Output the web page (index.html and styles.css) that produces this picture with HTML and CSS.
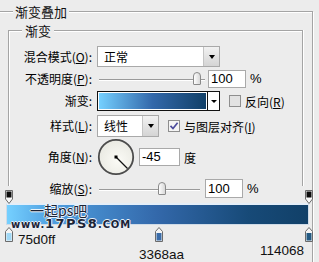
FILE: index.html
```html
<!DOCTYPE html>
<html lang="zh">
<head>
<meta charset="utf-8">
<link rel="stylesheet" href="styles.css">
</head>
<body>
<fieldset class="outer">
  <legend class="outer-title">渐变叠加</legend>
  <fieldset class="inner">
    <legend class="inner-title">渐变</legend>

    <div class="row r1">
      <span class="lbl">混合模式(<u>O</u>):</span>
      <div class="select sel-mode"><span class="sel-text">正常</span><span class="sel-btn"><i class="tri"></i></span></div>
    </div>

    <div class="row r2">
      <span class="lbl">不透明度(<u>P</u>):</span>
      <div class="slider s-opacity"><span class="thumb"></span></div>
      <span class="num n-opacity">100</span>
      <span class="unit">%</span>
    </div>

    <div class="row r3">
      <span class="lbl">渐变:</span>
      <div class="grad-field"><span class="grad-swatch"></span><span class="grad-btn"><i class="tri"></i></span></div>
      <span class="check"></span>
      <span class="check-lbl">反向(<u>R</u>)</span>
    </div>

    <div class="row r4">
      <span class="lbl">样式(<u>L</u>):</span>
      <div class="select sel-style"><span class="sel-text">线性</span><span class="sel-btn"><i class="tri"></i></span></div>
      <span class="check checked"><svg width="10" height="10" viewBox="0 0 10 10"><path d="M1.5 4.8 L4 7.5 L8.6 1.8" fill="none" stroke="#4b4b9c" stroke-width="1.7"/></svg></span>
      <span class="check-lbl">与图层对齐(<u>I</u>)</span>
    </div>

    <div class="row r5">
      <span class="lbl">角度(<u>N</u>):</span>
      <svg class="dial" width="38" height="38" viewBox="0 0 38 38">
        <defs>
          <radialGradient id="dg" cx="0.55" cy="0.6" r="0.6">
            <stop offset="0" stop-color="#fbfbf6"/>
            <stop offset="1" stop-color="#e9e9e2"/>
          </radialGradient>
        </defs>
        <circle cx="19" cy="19" r="17.2" fill="url(#dg)" stroke="#4c4c4c" stroke-width="1.8"/>
        <line x1="19" y1="19" x2="30.5" y2="30.5" stroke="#111" stroke-width="1.2"/>
        <rect x="17.5" y="17.5" width="3" height="3" fill="#000"/>
      </svg>
      <span class="num n-angle">-45</span>
      <span class="unit deg">度</span>
    </div>

    <div class="row r6">
      <span class="lbl">缩放(<u>S</u>):</span>
      <div class="slider s-scale"><span class="thumb"></span></div>
      <span class="num n-scale">100</span>
      <span class="unit">%</span>
    </div>
  </fieldset>

  <div class="editor">
    <svg class="stop top s-left" width="8" height="14" viewBox="0 0 8 14"><path d="M0.5 0.5 H7.5 V9 L4 13.5 L0.5 9 Z" fill="#fafafa" stroke="#6b6b6b"/><rect x="1.5" y="1.5" width="5" height="6" fill="#0d0d0d"/></svg>
    <svg class="stop top s-right" width="8" height="14" viewBox="0 0 8 14"><path d="M0.5 0.5 H7.5 V9 L4 13.5 L0.5 9 Z" fill="#fafafa" stroke="#6b6b6b"/><rect x="1.5" y="1.5" width="5" height="6" fill="#0d0d0d"/></svg>

    <div class="strip"></div>

    <svg class="stop bottom b-left" width="8" height="15" viewBox="0 0 8 15"><path d="M4 0.5 L7.5 4.5 V14.5 H0.5 V4.5 Z" fill="#f4f4f4" stroke="#6b6b6b"/><rect x="1.5" y="6" width="5" height="7.5" fill="#9fd8f6"/></svg>
    <svg class="stop bottom b-mid" width="8" height="15" viewBox="0 0 8 15"><path d="M4 0.5 L7.5 4.5 V14.5 H0.5 V4.5 Z" fill="#f4f4f4" stroke="#6b6b6b"/><rect x="1.5" y="6" width="5" height="7.5" fill="#3a6ca8"/></svg>
    <svg class="stop bottom b-right" width="8" height="15" viewBox="0 0 8 15"><path d="M4 0.5 L7.5 4.5 V14.5 H0.5 V4.5 Z" fill="#f4f4f4" stroke="#6b6b6b"/><rect x="1.5" y="6" width="5" height="7.5" fill="#235a82"/></svg>

    <span class="code c-left">75d0ff</span>
    <span class="code c-mid">3368aa</span>
    <span class="code c-right">114068</span>

    <span class="wm wm-cn">一起ps吧</span>
    <span class="wm wm-url">www.<b>17PS8</b>.COM</span>
  </div>
</fieldset>
</body>
</html>
```

FILE: styles.css
```css
html, body {
  height: 100%;
  overflow: hidden;
}

body {
  margin: 0;
  background: #ececec;
  color: #000;
  font-family: "Noto Sans CJK SC", "Liberation Sans", sans-serif;
  font-size: 12px;
}

u {
  text-decoration: underline;
  text-underline-offset: 1px;
}

.outer {
  box-sizing: border-box;
  margin: 3px 0 0 -3px;
  width: 316px;
  min-width: 0;
  border: 1px solid #a4a4a4;
  box-shadow: inset 1px 1px 0 #fff, 1px 1px 0 #fff;
  padding: 2px 9px 0 10px;
}

.outer-title,
.inner-title {
  font-size: 13px;
  line-height: 17px;
  background: #ececec;
  color: #111;
}

.outer-title {
  margin-left: 5px;
  padding: 0 2px;
}

.inner {
  box-sizing: border-box;
  height: 164px;
  margin: 0;
  min-width: 0;
  border: 1px solid #a4a4a4;
  border-bottom: none;
  box-shadow: inset 1px 1px 0 #fff, 1px 0 0 #fff;
  padding: 7px 4px 0 11px;
}

.inner-title {
  margin-left: 2px;
  padding: 0 3px;
}

.row {
  display: flex;
  align-items: center;
  box-sizing: border-box;
}

.r1 { height: 21px; }
.r2 { height: 21px; margin-top: 1px; }
.r3 { height: 22px; padding-top: 2px; }
.r4 { height: 26px; padding-top: 4px; }
.r5 { height: 40px; }
.r6 { height: 23px; }

.lbl {
  flex: none;
  width: 72px;
  margin-right: 5px;
  text-align: right;
  line-height: 14px;
  white-space: nowrap;
}

/* select boxes */
.select {
  box-sizing: border-box;
  display: flex;
  height: 21px;
  border: 1px solid #a9a9a9;
  background: #fff;
}

.sel-mode { width: 123px; }
.sel-style { width: 62px; height: 22px; }

.sel-text {
  flex: 1;
  padding-left: 6px;
  line-height: 19px;
}

.sel-btn {
  width: 15px;
  display: flex;
  align-items: center;
  justify-content: center;
  background: linear-gradient(#f2f2f2, #d4d4d4);
  border-left: 1px solid #c4c4c4;
}

.tri {
  width: 0;
  height: 0;
  border-left: 3.5px solid transparent;
  border-right: 3.5px solid transparent;
  border-top: 4px solid #000;
}

/* slider */
.slider {
  position: relative;
  height: 14px;
  flex: none;
}

.slider::before {
  content: "";
  position: absolute;
  left: 2px;
  right: 0;
  top: 7px;
  height: 1px;
  background: #9a9a9a;
  box-shadow: 0 1px 0 #fff;
}

.s-opacity { width: 108px; }
.s-scale { width: 103px; margin-right: 5px; }

.thumb {
  position: absolute;
  top: 0;
  width: 8px;
  height: 13px;
  box-sizing: border-box;
  border: 1px solid #8a8a8a;
  border-radius: 4px 4px 1px 1px;
  background: linear-gradient(90deg, #fdfdfd, #d8d8d8);
}

.s-opacity .thumb { left: 96px; }
.s-scale .thumb { left: 61px; }

/* numeric fields */
.num {
  box-sizing: border-box;
  height: 18px;
  border: 1px solid #a9a9a9;
  background: #fff;
  font-family: "Liberation Sans", Arial, sans-serif;
  font-size: 13px;
  line-height: 16px;
  padding-left: 2px;
}

.n-opacity { width: 38px; margin-left: 3px; }
.n-scale { width: 38px; height: 19px; line-height: 17px; }
.n-angle { width: 41px; margin-left: 4px; }

.unit {
  margin-left: 4px;
  font-family: "Liberation Sans", Arial, sans-serif;
  font-size: 13px;
}

.unit.deg {
  font-family: "Noto Sans CJK SC", sans-serif;
  font-size: 12px;
}

/* gradient field */
.grad-field {
  box-sizing: border-box;
  display: flex;
  width: 123px;
  height: 20px;
  border: 1px solid #111;
  background: #fff;
}

.grad-swatch {
  flex: 1;
  margin: 1px;
  background: linear-gradient(90deg, #75d0ff, #3368aa 50%, #114068);
}

.grad-btn {
  width: 11px;
  display: flex;
  align-items: center;
  justify-content: center;
  border-left: 1px solid #111;
}

.grad-btn .tri {
  border-left-width: 3px;
  border-right-width: 3px;
  border-top-width: 3px;
}

/* checkboxes */
.check {
  box-sizing: border-box;
  flex: none;
  width: 12px;
  height: 12px;
  margin-left: 9px;
  border: 1px solid #8e8e8e;
  background: #e2e2e2;
  display: flex;
  align-items: center;
  justify-content: center;
}

.check.checked {
  background: #f4f4f4;
}

.check-lbl {
  margin-left: 4px;
  white-space: nowrap;
}

.dial {
  flex: none;
  display: block;
}

/* gradient editor */
.editor {
  position: relative;
  box-sizing: border-box;
  height: 90px;
  margin: 0 -9px 0 -3px;
  padding-top: 17px;
}

.strip {
  box-sizing: border-box;
  margin-left: 1px;
  width: 303px;
  height: 22px;
  border: 1px solid #cfdbe7;
  border-top: 2px solid #e4eef8;
  background: linear-gradient(90deg, #75d0ff 0%, #4f9fe0 15%, #3368aa 50%, #174a78 80%, #114068 100%);
}

.stop {
  position: absolute;
  display: block;
}

.stop.top { top: 4px; }
.s-left { left: 0; }
.s-right { left: 300px; }

.stop.bottom { top: 41px; }
.b-left { left: 0; }
.b-mid { left: 150px; }
.b-right { left: 300px; }

.code {
  position: absolute;
  font-family: "Liberation Sans", Arial, sans-serif;
  font-size: 13.5px;
  line-height: 15px;
  color: #111;
}

.c-left { left: 13px; top: 46px; }
.c-mid { left: 134px; top: 61px; }
.c-right { left: 255px; top: 57px; }

.wm {
  position: absolute;
  color: #1c2437;
  text-shadow: 1px 0 0 #e8f2fa, -1px 0 0 #e8f2fa, 0 1px 0 #e8f2fa, 0 -1px 0 #e8f2fa;
  white-space: nowrap;
}

.wm-cn {
  left: 25px;
  top: 16px;
  font-size: 14px;
  line-height: 16px;
}

.wm-url {
  left: 6px;
  top: 32px;
  font-family: "DejaVu Sans", sans-serif;
  font-size: 10px;
  line-height: 11px;
  font-weight: bold;
  letter-spacing: 0.8px;
}

.wm-url b {
  font-size: 13px;
  letter-spacing: 1.4px;
}
```
